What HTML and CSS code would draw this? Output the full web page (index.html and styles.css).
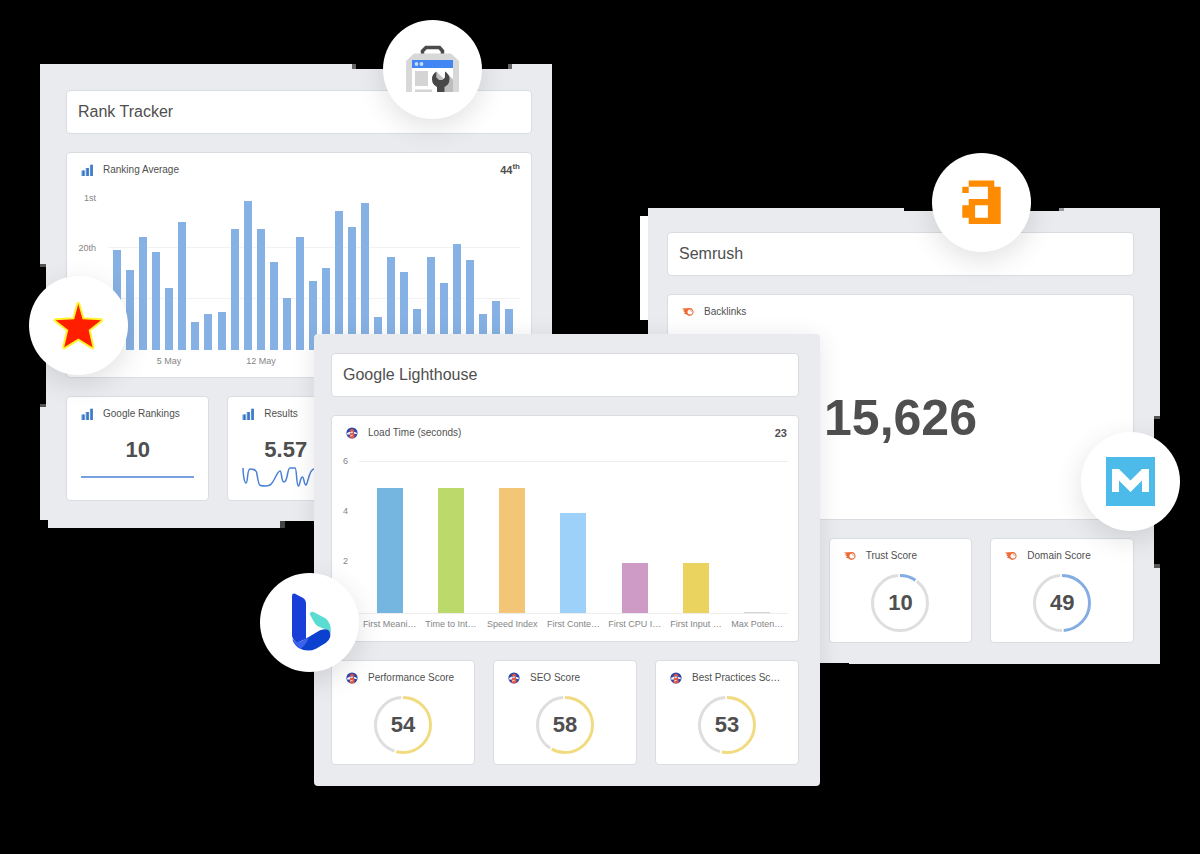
FILE: index.html
```html
<!DOCTYPE html>
<html lang="en">
<head>
<meta charset="utf-8">
<title>SEO dashboards</title>
<link rel="stylesheet" href="styles.css">
</head>
<body>
<svg class="sprite" aria-hidden="true">
  <symbol id="i-bars" viewBox="0 0 12 12">
    <path fill="#5b93d8" d="M.5 6.500h3V12h-3zM4.700 4h3v8h-3zM8.900 .8h2.800V12H8.900z"/>
    <path fill="#3671bd" d="M2 6.500h1.500V12H2zM6.200 4h1.500v8H6.200zM10.300 .8h1.400V12h-1.400z"/>
  </symbol>
  <symbol id="i-lighthouse" viewBox="0 0 12 12">
    <circle cx="6" cy="6" r="5.600" fill="#2c45a6"/>
    <path fill="#f0f2fa" d="M1 6l3-1.500.8 1-.8 2-2.600.3zM8 4.800l2.800 1v1.500L8 6.700z"/>
    <path fill="#e5573f" d="M3.800 3.200L6 1.600l2.200 1.600v1.200H3.800zM4.200 6.200l3.600-1 1 5.400Q6 12.200 3.300 10.600z"/>
    <path fill="#fbe4dd" d="M4.800 4.400h2.500v1.100l-2.800.8zM4.200 8.500l2.400-.7v.9l-2.600.8z"/>
  </symbol>
  <symbol id="i-semrush" viewBox="0 0 12 12">
    <path fill="#ed6a36" d="M0 2.500Q4 2.100 8 2.100A3.900 3.900 0 1 1 4.600 8.400Q2.800 8.200 1.600 6.900L3.300 6.700Q2.200 5.900.8 4.600L2.800 4.500Q1.400 3.700 0 2.500z"/>
    <circle cx="8" cy="6" r="2.500" fill="#fff"/>
    <path fill="#f08a60" d="M8 4.200A1.800 1.800 0 0 1 9.800 6H9A1 1 0 0 0 8 5z"/>
  </symbol>
</svg>

<main class="stage">
  <section class="panel panel-rank">
    <h2 class="card title">Rank Tracker</h2>
    <article class="card chart">
      <header class="head"><svg class="icon"><use href="#i-bars"/></svg><h3>Ranking Average</h3><strong>44<sup>th</sup></strong></header>
      <div class="figure figure-rank">
        <div class="scale"><span>1st</span><span>20th</span></div>
        <div class="plot plot-rank">
          <i style="height:100px"></i><i style="height:80px"></i><i style="height:113px"></i><i style="height:98px"></i><i style="height:62px"></i><i style="height:128px"></i><i style="height:28px"></i><i style="height:36px"></i><i style="height:38px"></i><i style="height:121px"></i><i style="height:149px"></i><i style="height:121px"></i><i style="height:88px"></i><i style="height:52px"></i><i style="height:113px"></i><i style="height:69px"></i><i style="height:82px"></i><i style="height:139px"></i><i style="height:123px"></i><i style="height:147px"></i><i style="height:33px"></i><i style="height:93px"></i><i style="height:78px"></i><i style="height:41px"></i><i style="height:93px"></i><i style="height:67px"></i><i style="height:106px"></i><i style="height:90px"></i><i style="height:36px"></i><i style="height:49px"></i><i style="height:41px"></i>
        </div>
        <div class="weeks"><span>5 May</span><span>12 May</span></div>
      </div>
    </article>
    <div class="row">
      <article class="card small">
        <header class="head"><svg class="icon"><use href="#i-bars"/></svg><h3>Google Rankings</h3></header>
        <p class="value">10</p>
        <svg class="spark" viewBox="0 0 114 24"><path d="M0 13H113"/></svg>
      </article>
      <article class="card small">
        <header class="head"><svg class="icon"><use href="#i-bars"/></svg><h3>Results</h3></header>
        <p class="value value-wide">5.57</p>
        <svg class="spark" viewBox="0 0 114 24"><path d="M1 4C1 8 2 19 4 19S5 5 8 5C11 5 13 5 14.500 8C16 14 16 21 18.500 21.500C21 22 26 22 28 21C32 19 35 7 38 7C40 7 39 18 42 18C46 18 45 4 48 4H53C55 4 54 21 56.500 22C58 22 58 13 60.500 13C62 13 62 21 64 21C66 20 67 5 72 5C77 5 75 20 79 20S84 6 88 6S94 18 98 18S106 6 113 5"/></svg>
      </article>
    </div>
  </section>

  <section class="panel panel-semrush">
    <h2 class="card title">Semrush</h2>
    <article class="card chart">
      <header class="head"><svg class="icon"><use href="#i-semrush"/></svg><h3>Backlinks</h3></header>
      <p class="total">15,626</p>
    </article>
    <div class="row row-end">
      <article class="card small">
        <header class="head"><svg class="icon"><use href="#i-semrush"/></svg><h3>Trust Score</h3></header>
        <div class="gauge blue"><svg viewBox="0 0 60 60"><circle class="rest" r="27.500" cx="30" cy="30" pathLength="100" stroke-dasharray="0 10.500 88.500 1"/><circle class="part" r="27.500" cx="30" cy="30" pathLength="100" stroke-dasharray="9.500 90.500"/></svg><b>10</b></div>
      </article>
      <article class="card small">
        <header class="head"><svg class="icon"><use href="#i-semrush"/></svg><h3>Domain Score</h3></header>
        <div class="gauge blue"><svg viewBox="0 0 60 60"><circle class="rest" r="27.500" cx="30" cy="30" pathLength="100" stroke-dasharray="0 50 49 1"/><circle class="part" r="27.500" cx="30" cy="30" pathLength="100" stroke-dasharray="49 51"/></svg><b>49</b></div>
      </article>
    </div>
  </section>

  <section class="panel panel-lighthouse">
    <h2 class="card title">Google Lighthouse</h2>
    <article class="card chart">
      <header class="head"><svg class="icon"><use href="#i-lighthouse"/></svg><h3>Load Time (seconds)</h3><strong>23</strong></header>
      <div class="figure figure-load">
        <div class="scale"><span>6</span><span>4</span><span>2</span></div>
        <div class="plot plot-load">
          <i class="c1" style="height:125px"></i><i class="c2" style="height:125px"></i><i class="c3" style="height:125px"></i><i class="c4" style="height:100px"></i><i class="c5" style="height:50px"></i><i class="c6" style="height:50px"></i><i class="c7" style="height:1px"></i>
        </div>
        <div class="metrics"><span>First Meani…</span><span>Time to Int…</span><span>Speed Index</span><span>First Conte…</span><span>First CPU I…</span><span>First Input …</span><span>Max Poten…</span></div>
      </div>
    </article>
    <div class="row">
      <article class="card small">
        <header class="head"><svg class="icon"><use href="#i-lighthouse"/></svg><h3>Performance Score</h3></header>
        <div class="gauge"><svg viewBox="0 0 60 60"><circle class="rest" r="27.500" cx="30" cy="30" pathLength="100" stroke-dasharray="0 55 44 1"/><circle class="part" r="27.500" cx="30" cy="30" pathLength="100" stroke-dasharray="54 46"/></svg><b>54</b></div>
      </article>
      <article class="card small">
        <header class="head"><svg class="icon"><use href="#i-lighthouse"/></svg><h3>SEO Score</h3></header>
        <div class="gauge"><svg viewBox="0 0 60 60"><circle class="rest" r="27.500" cx="30" cy="30" pathLength="100" stroke-dasharray="0 59 40 1"/><circle class="part" r="27.500" cx="30" cy="30" pathLength="100" stroke-dasharray="58 42"/></svg><b>58</b></div>
      </article>
      <article class="card small">
        <header class="head"><svg class="icon"><use href="#i-lighthouse"/></svg><h3>Best Practices Sc…</h3></header>
        <div class="gauge"><svg viewBox="0 0 60 60"><circle class="rest" r="27.500" cx="30" cy="30" pathLength="100" stroke-dasharray="0 54 45 1"/><circle class="part" r="27.500" cx="30" cy="30" pathLength="100" stroke-dasharray="53 47"/></svg><b>53</b></div>
      </article>
    </div>
  </section>

  <div class="badge badge-console">
    <svg viewBox="0 0 99 99" role="img" aria-label="Search Console">
      <path d="M39.500 36V31L43 27.500H56.500L59.500 31V36" fill="none" stroke="#4b4b4c" stroke-width="3.500"/>
      <path fill="#d8d8d8" d="M23 41L31 33.500H68L76 41V72H23z"/>
      <path fill="#fff" d="M29 40H70V72H29z"/>
      <path fill="#4285f4" d="M29 40H70V48H29z"/>
      <circle cx="33.500" cy="44" r="1.900" fill="#c9dcff"/><circle cx="38.500" cy="44" r="1.900" fill="#c9dcff"/>
      <path fill="#d4d4d4" d="M32 51H45V66H32zM32 69.500H49V72H32z"/>
      <path fill="#bdbdbd" d="M53.500 51.500L61 59V61H54zM62 51.500L70 59.500V72H61z"/>
      <path fill="#474747" d="M53.500 51.500Q49 54 49 59Q49 64.500 54 67V72H61.500V67Q66.500 64.500 66.500 59Q66.500 54 62 51.500V57.500L59.500 60H56L53.500 57.500z"/>
    </svg>
  </div>
  <div class="badge badge-ahrefs">
    <svg viewBox="0 0 99 99" role="img" aria-label="Ahrefs"><path transform="translate(30.300 27.500) scale(6.400 6.200)" fill="#ff8b00" fill-rule="evenodd" d="M1 0H5V1H6V7H1V6H0V4H1V3H4V1H1zM0 1H1V2H0zM2 4H4V6H2z"/></svg>
  </div>
  <div class="badge badge-star">
    <svg viewBox="0 0 99 99" role="img" aria-label="Star"><path fill="#ff1e00" stroke="#fff22e" stroke-width="4" stroke-linejoin="round" paint-order="stroke" d="M49.300 28L53.600 43.300L72 44.300L59.600 54L63.500 71.300L49.300 62.500L35.200 71.300L39.300 54L26.700 44.300L45.200 43.300z"/></svg>
  </div>
  <div class="badge badge-moz">
    <svg viewBox="0 0 99 99" role="img" aria-label="Moz"><path fill="#4dbbe9" d="M25 25H74V74H25z"/><path fill="#fff" d="M31 37H38L49.500 48.500L61 37H68V60H61V48.500L49.500 60L38 48.500V60H31z"/></svg>
  </div>
  <div class="badge badge-bing">
    <svg viewBox="60 39 297 297" role="img" aria-label="Bing">
      <path fill="#5bdcd2" d="M209 162Q213 152 222 157L256 175Q276 190 272 222Q268 208 252 206L232 198Q226 194 220 182z"/>
      <path fill="#1a3ed8" d="M156 108Q156 99 165 101L188 113Q198 119 198 130V236L172 248Q156 240 156 225z"/>
      <path fill="#0c40cf" d="M170 248Q184 248 196 237L240 211Q262 203 268 213Q278 232 258 248L228 266Q202 279 175 263Q162 254 157 238z"/>
      <path fill="#3b62ec" d="M158 236Q164 246 176 246Q190 243 206 231Q202 252 182 266Q162 256 158 236z"/>
    </svg>
  </div>
</main>
</body>
</html>
```
FILE: styles.css
```css
* {
  box-sizing: border-box;
}

body {
  margin: 0;
  background: #000;
  color: #4f4f4f;
  font-family: "Liberation Sans", Arial, sans-serif;
  font-size: 10px;
}

h2,
h3,
p {
  margin: 0;
  font-weight: 400;
}

.sprite {
  position: absolute;
  width: 0;
  height: 0;
}

/* Canvas with overlapping windows; the gradients are the chipped edge fragments */
.stage {
  position: relative;
  min-height: 100vh;
  background-repeat: no-repeat;
  background-image:
    linear-gradient(#fff, #fff),
    linear-gradient(#666, #666),
    linear-gradient(#666, #666),
    linear-gradient(#555, #555),
    linear-gradient(#555, #555),
    linear-gradient(#444, #444),
    linear-gradient(#999, #999),
    linear-gradient(#555, #555),
    linear-gradient(#555, #555);
  background-size: 8px 104px, 4px 5px, 4px 5px, 6px 3px, 6px 3px, 5px 7px, 5px 3px, 6px 3px, 6px 4px;
  background-position: 640px 216px, 352px 64px, 508px 64px, 40px 264px, 40px 404px, 280px 521px, 1059px 208px, 1154px 416px, 1154px 564px;
}

.panel {
  position: absolute;
  display: flex;
  flex-direction: column;
  gap: 18px;
  background: #e9ebee;
}

.panel-rank {
  left: 40px;
  top: 64px;
  width: 512px;
  padding: 26px 20px 27px 26px;
  clip-path: polygon(0 0, 312px 0, 312px 5px, 472px 5px, 472px 0, 100% 0, 100% 457px, 240px 457px, 240px 100%, 8px 100%, 8px 456px, 0 456px, 0 343px, 6px 343px, 6px 200px, 0 200px);
}

.panel-semrush {
  left: 648px;
  top: 208px;
  width: 512px;
  padding: 24px 26px 21px 19px;
  clip-path: polygon(0 0, 256px 0, 256px 3px, 416px 3px, 416px 0, 100% 0, 100% 208px, 506px 208px, 506px 360px, 100% 360px, 100% 100%, 201px 100%, 201px 455px, 0 455px);
}

.panel-lighthouse {
  left: 314px;
  top: 334px;
  width: 506px;
  padding: 19px 21px 21px 17px;
  border-radius: 4px;
  box-shadow: 0 4px 24px rgba(0, 0, 0, 0.1);
}

.card {
  background: #fff;
  border: 1px solid #d9dce0;
  border-radius: 4px;
}

.title {
  padding: 0 11px;
  font-size: 16px;
  line-height: 42px;
}

.chart {
  min-height: 226px;
}

.panel-lighthouse .chart {
  min-height: 227px;
}

.row {
  display: grid;
  grid-template-columns: repeat(3, 1fr);
  gap: 18px;
}

.row-end .card:first-child {
  grid-column-start: 2;
}

.small {
  height: 105px;
}

.head {
  display: flex;
  align-items: center;
  gap: 10px;
  padding: 10px 11px 0 14px;
  line-height: 14px;
}

.icon {
  flex: none;
  width: 12px;
  height: 12px;
}

.head h3 {
  flex: 1;
  font-size: 10px;
  white-space: nowrap;
}

.head strong {
  font-size: 11px;
}

.head sup {
  font-size: 8px;
  line-height: 0;
}

/* Bar charts */
.figure {
  display: grid;
  color: #858585;
  font-size: 9px;
  line-height: 10px;
}

.figure-rank {
  grid-template-columns: 29px 1fr;
  column-gap: 12px;
  padding: 16px 11px 0 0;
}

.figure-load {
  grid-template-columns: 16px 1fr;
  column-gap: 11px;
  padding: 16px 10px 0 0;
}

.scale {
  display: grid;
  grid-auto-rows: 50px;
  align-content: start;
  text-align: right;
}

.plot {
  display: flex;
  align-items: flex-end;
  height: 152px;
  margin-top: 5px;
  background-repeat: no-repeat;
}

.plot-rank {
  justify-content: space-between;
  padding: 0 7px 0 5px;
  background-image: linear-gradient(#f1f2f3, #f1f2f3), linear-gradient(#f1f2f3, #f1f2f3);
  background-size: 100% 1px;
  background-position: 0 49px, 0 100px;
}

.plot-rank i {
  width: 8px;
  background: #86b1e4;
}

.plot-load {
  justify-content: space-around;
  border-top: 1px solid #ededee;
  border-bottom: 1px solid #ededee;
  height: 153px;
}

.plot-load i {
  width: 26px;
}

.c1 { background: #74b6e0; }
.c2 { background: #bcd96b; }
.c3 { background: #f3c577; }
.c4 { background: #9dd1fa; }
.c5 { background: #ce9bc6; }
.c6 { background: #ead35f; }
.c7 { background: #d4d4d4; }

.weeks,
.metrics {
  display: grid;
  grid-column: 2;
  padding-top: 6px;
  text-align: center;
  white-space: nowrap;
}

.weeks {
  grid-template-columns: repeat(2, 92px);
  padding-left: 15px;
}

.metrics {
  grid-template-columns: repeat(7, 1fr);
  padding-top: 5px;
}

/* Numbers */
.value {
  padding-top: 16px;
  font-size: 22px;
  font-weight: 700;
  line-height: 26px;
  text-align: center;
}

.value-wide {
  padding-left: 36px;
  text-align: left;
}

.spark {
  display: block;
  width: 114px;
  height: 24px;
  margin: 1px auto 0;
  fill: none;
  stroke: #4a80d6;
  stroke-width: 1.5;
}

.total {
  padding-top: 69px;
  font-size: 50px;
  font-weight: 700;
  line-height: 60px;
  text-align: center;
}

.gauge {
  display: grid;
  place-items: center;
  margin-top: 10px;
}

.gauge > * {
  grid-area: 1 / 1;
}

.gauge svg {
  width: 60px;
  height: 60px;
  transform: rotate(-90deg);
}

.gauge circle {
  fill: none;
  stroke: #dedede;
  stroke-width: 3;
}

.gauge .part {
  stroke: #f0db81;
}

.gauge.blue .part {
  stroke: #84aee3;
}

.gauge b {
  font-size: 22px;
  line-height: 26px;
}

/* Round logos */
.badge {
  position: absolute;
  width: 99px;
  height: 99px;
  border-radius: 50%;
  background: #fff;
  box-shadow: 0 8px 28px rgba(0, 0, 0, 0.12);
}

.badge svg {
  display: block;
  width: 100%;
  height: 100%;
}

.badge-console { left: 383px; top: 20px; }
.badge-ahrefs { left: 932px; top: 153px; }
.badge-star { left: 29px; top: 276px; }
.badge-moz { left: 1081px; top: 432px; }
.badge-bing { left: 260px; top: 573px; }
```
